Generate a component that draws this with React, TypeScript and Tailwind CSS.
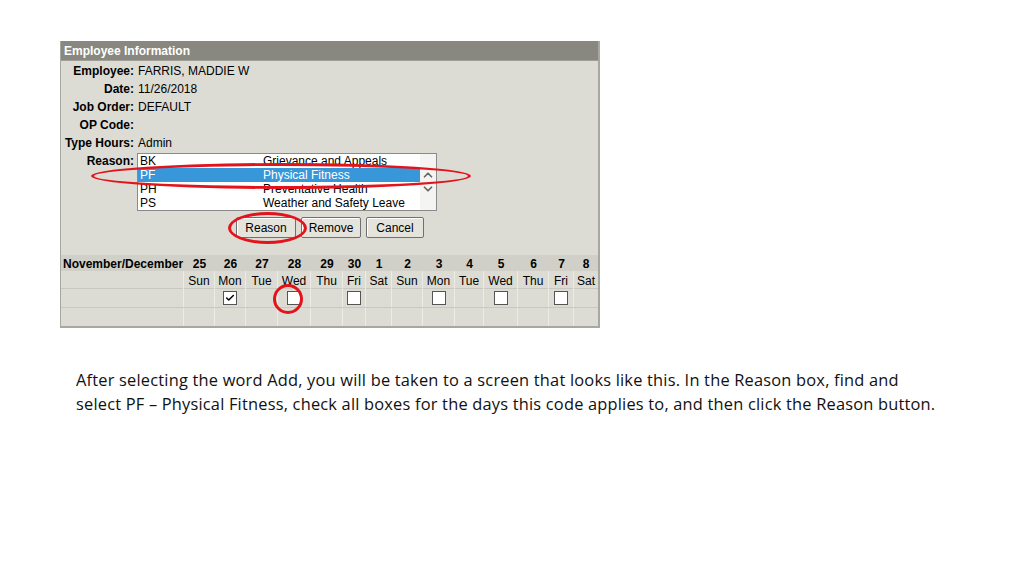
import { ChevronUp, ChevronDown, Check } from 'lucide-react';

const fields = [
  { label: 'Employee:', value: 'FARRIS, MADDIE W' },
  { label: 'Date:', value: '11/26/2018' },
  { label: 'Job Order:', value: 'DEFAULT' },
  { label: 'OP Code:', value: '' },
  { label: 'Type Hours:', value: 'Admin' },
];

const reasons = [
  { code: 'BK', name: 'Grievance and Appeals' },
  { code: 'PF', name: 'Physical Fitness', selected: true },
  { code: 'PH', name: 'Preventative Health' },
  { code: 'PS', name: 'Weather and Safety Leave' },
];

const days = [
  { num: '25', name: 'Sun' },
  { num: '26', name: 'Mon', box: true, checked: true },
  { num: '27', name: 'Tue' },
  { num: '28', name: 'Wed', box: true },
  { num: '29', name: 'Thu' },
  { num: '30', name: 'Fri', box: true },
  { num: '1', name: 'Sat' },
  { num: '2', name: 'Sun' },
  { num: '3', name: 'Mon', box: true },
  { num: '4', name: 'Tue' },
  { num: '5', name: 'Wed', box: true },
  { num: '6', name: 'Thu' },
  { num: '7', name: 'Fri', box: true },
  { num: '8', name: 'Sat' },
];

const gridCols =
  'grid grid-cols-[123px_31px_31px_32px_33px_32px_23px_26px_31px_32px_29px_34px_31px_25px_24px]';

function Checkbox({ checked }: { checked?: boolean }) {
  return (
    <span className="flex h-[14px] w-[14px] items-center justify-center border border-[#555] bg-white">
      {checked && <Check className="h-[10px] w-[10px] text-black" strokeWidth={3.5} />}
    </span>
  );
}

function Button({ children, w }: { children: string; w: string }) {
  return (
    <button
      className={`${w} h-[21px] rounded-[2px] border border-[#707070] bg-[#e4e4dc] text-[12px] leading-none text-black shadow-[inset_1px_1px_0_#fff]`}
    >
      {children}
    </button>
  );
}

export default function App() {
  return (
    <div
      className="h-[576px] w-[1024px] overflow-hidden bg-white pl-[60px] pt-[41px]"
      style={{ fontFamily: '"Liberation Sans", Arial, sans-serif' }}
    >
      <div className="relative w-[540px] border-r-2 border-b-2 border-l border-[#a8a8a0] bg-[#dcdcd4]">
        <div className="h-[20px] border-b border-[#a0a098] bg-[#888880] pl-[3px] text-[12px] font-bold leading-[20px] text-white">
          Employee Information
        </div>

        {/* form fields */}
        <div className="flex flex-col pt-[1px] text-[12px] text-black">
          {fields.map(f => (
            <div key={f.label} className="flex h-[18px] items-center">
              <span className="w-[73px] text-right font-bold">{f.label}</span>
              <span className="pl-[4px]">{f.value}</span>
            </div>
          ))}
          <div className="flex pt-[1px]">
            <span className="w-[73px] pt-[1px] text-right font-bold leading-[14px]">Reason:</span>
            <div className="ml-[3px] flex h-[58px] w-[300px] border border-[#8a8a8a] bg-white">
              <div className="flex flex-1 flex-col">
                {reasons.map(r => (
                  <div
                    key={r.code}
                    className={`flex h-[14px] items-center leading-[14px] ${r.selected ? 'bg-[#3797d9] text-white' : 'text-black'}`}
                  >
                    <span className="w-[125px] pl-[2px]">{r.code}</span>
                    <span>{r.name}</span>
                  </div>
                ))}
              </div>
              <div className="flex w-[16px] flex-col items-center bg-[#f4f4f2] pt-[14px] text-[#666]">
                <ChevronUp className="h-[14px] w-[14px]" strokeWidth={3} />
                <ChevronDown className="h-[14px] w-[14px]" strokeWidth={3} />
              </div>
            </div>
          </div>
          <div className="ml-[175px] mt-[6px] flex gap-[5px]">
            <Button w="w-[60px]">Reason</Button>
            <Button w="w-[60px]">Remove</Button>
            <Button w="w-[58px]">Cancel</Button>
          </div>
        </div>

        {/* day grid */}
        <div className="mt-[17px] text-[12px] text-black">
          <div className={`${gridCols} h-[16px] items-center bg-[#d0d0c8] font-bold`}>
            <span className="pl-[2px]">November/December</span>
            {days.map(d => (
              <span key={d.num} className="text-center">{d.num}</span>
            ))}
          </div>
          <div className={`${gridCols} h-[18px] border-b border-[#c8c8c0]`}>
            <span className="border-r border-[#ececE6]" />
            {days.map(d => (
              <span key={d.num} className="flex items-center justify-center border-r border-[#ececE6] pt-[1px] last:border-r-0">
                {d.name}
              </span>
            ))}
          </div>
          <div className={`${gridCols} h-[19px] border-b border-[#c8c8c0]`}>
            <span className="border-r border-[#ececE6]" />
            {days.map(d => (
              <span key={d.num} className="flex items-center justify-center border-r border-[#ececE6] last:border-r-0">
                {d.box && <Checkbox checked={d.checked} />}
              </span>
            ))}
          </div>
          <div className={`${gridCols} h-[18px]`}>
            <span className="border-r border-[#ececE6]" />
            {days.map(d => (
              <span key={d.num} className="border-r border-[#ececE6] last:border-r-0" />
            ))}
          </div>
        </div>

        {/* red annotation marks */}
        <div className="absolute left-[30px] top-[122px] h-[26px] w-[380px] rounded-[50%] border-[3px] border-[#e3131b]" />
        <div className="absolute left-[167px] top-[171px] h-[32px] w-[79px] rounded-[50%] border-[3px] border-[#e3131b]" />
        <div className="absolute left-[212px] top-[243px] h-[30px] w-[30px] rounded-full border-[3px] border-[#e3131b]" />
      </div>

      <div
        className="ml-[16px] mt-[40px] text-[16.4px] leading-[23.5px] tracking-[0.2px] text-[#111]"
        style={{ fontFamily: '"Open Sans", Lato, sans-serif' }}
      >
        <p className="whitespace-nowrap">
          After selecting the word Add, you will be taken to a screen that looks like this. In the Reason box, find and
        </p>
        <p className="whitespace-nowrap">
          select PF – Physical Fitness, check all boxes for the days this code applies to, and then click the Reason button.
        </p>
      </div>
    </div>
  );
}
